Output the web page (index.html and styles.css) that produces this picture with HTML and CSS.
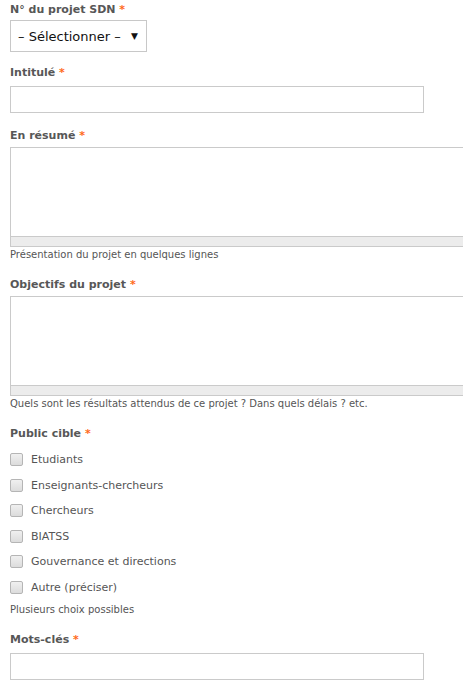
FILE: index.html
```html
<!DOCTYPE html>
<html lang="fr">
<head>
<meta charset="utf-8">
<link rel="stylesheet" href="styles.css">
</head>
<body>
<form class="form">
  <div class="field f-select">
    <label class="lbl">N° du projet SDN <span class="req">*</span></label>
    <div class="select"><span class="select-text">– Sélectionner –</span><span class="arrow">▼</span></div>
  </div>
  <div class="field f-text">
    <label class="lbl">Intitulé <span class="req">*</span></label>
    <div class="input"></div>
  </div>
  <div class="field f-area">
    <label class="lbl">En résumé <span class="req">*</span></label>
    <div class="textarea"></div>
    <div class="grip"></div>
    <div class="help">Présentation du projet en quelques lignes</div>
  </div>
  <div class="field f-area">
    <label class="lbl">Objectifs du projet <span class="req">*</span></label>
    <div class="textarea"></div>
    <div class="grip"></div>
    <div class="help">Quels sont les résultats attendus de ce projet ? Dans quels délais ? etc.</div>
  </div>
  <div class="field f-checks">
    <label class="lbl">Public cible <span class="req">*</span></label>
    <ul class="checks">
      <li class="check"><span class="box"></span>Etudiants</li>
      <li class="check"><span class="box"></span>Enseignants-chercheurs</li>
      <li class="check"><span class="box"></span>Chercheurs</li>
      <li class="check"><span class="box"></span>BIATSS</li>
      <li class="check"><span class="box"></span>Gouvernance et directions</li>
      <li class="check"><span class="box"></span>Autre (préciser)</li>
    </ul>
    <div class="help">Plusieurs choix possibles</div>
  </div>
  <div class="field f-text">
    <label class="lbl">Mots-clés <span class="req">*</span></label>
    <div class="input"></div>
  </div>
</form>
</body>
</html>
```
FILE: styles.css
```css
html, body {
  margin: 0;
  padding: 0;
  overflow: hidden;
  background: #fff;
}
body {
  font-family: "DejaVu Sans", Verdana, sans-serif;
  color: #555;
  font-size: 11px;
}
.form {
  display: flex;
  flex-direction: column;
  padding: 2px 0 0 10px;
  width: 470px;
}
.field {
  margin-bottom: 15px;
}
.lbl {
  display: block;
  font-weight: bold;
  font-size: 11px;
  line-height: 16px;
  color: #575757;
  height: 16px;
}
.req {
  color: #ff6a1a;
}
.f-select {
  margin-bottom: 13px;
}
.f-select .select {
  margin-top: 2px;
  height: 30px;
  width: 120px;
  border: 1px solid #c8c8c8;
  display: flex;
  align-items: center;
  justify-content: space-between;
  padding: 0 8px 0 7px;
  color: #111;
  font-size: 13px;
}
.arrow {
  font-size: 9px;
  color: #111;
}
.f-text .input {
  margin-top: 5px;
  width: 412px;
  height: 25px;
  border: 1px solid #cacaca;
}
.f-area .textarea {
  margin-top: 3px;
  height: 88px;
  border: 1px solid #cacaca;
  border-bottom: none;
}
.f-area .grip {
  height: 9px;
  background: #ececec;
  border: 1px solid #cacaca;
}
.help {
  font-size: 10px;
  line-height: 14px;
  margin-top: 1px;
  color: #555;
}
.checks {
  list-style: none;
  margin: 5px 0 0;
  padding: 0;
  display: flex;
  flex-direction: column;
}
.check {
  display: flex;
  align-items: center;
  height: 25.5px;
  font-size: 11px;
  color: #555;
}
.box {
  width: 11px;
  height: 11px;
  border: 1px solid #b5b5b5;
  border-radius: 2px;
  background: linear-gradient(#f0f0f0, #dcdcdc);
  margin-right: 8px;
}
.f-checks .help {
  margin-top: 3px;
}
```
